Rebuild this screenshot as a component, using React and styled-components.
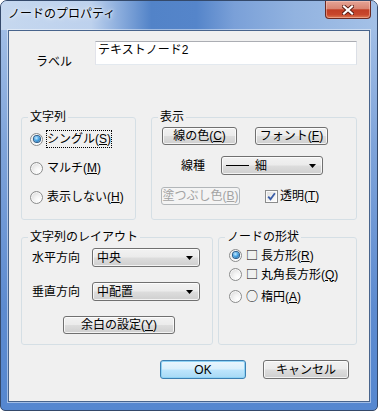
import React from 'react';
import styled, { createGlobalStyle, css } from 'styled-components';

const GlobalStyle = createGlobalStyle`
  html, body {
    margin: 0;
    padding: 0;
    background: #ffffff;
  }
  body {
    font-family: "Liberation Sans", "Noto Sans CJK JP", sans-serif;
    font-size: 12px;
    color: #000;
  }
`;

const Window = styled.div`
  width: 378px;
  height: 411px;
  box-sizing: border-box;
  border: 1px solid #34496a;
  border-radius: 7px 7px 5px 5px;
  background: linear-gradient(180deg, #a9c4e9 0%, #7fa4da 35%, #5d8bd0 75%, #5587d0 100%);
  display: flex;
  flex-direction: column;
  overflow: hidden;
`;

const TitleBar = styled.div`
  height: 29px;
  flex: none;
  display: flex;
  align-items: flex-start;
  background: linear-gradient(90deg, #c6d8ef 0%, #bdd1ed 24%, #8eafde 31%, #5283c8 40%, #5585ca 52%, #7aa0d8 62%, #92b3e0 78%, #a4c1e7 100%);
`;

const Title = styled.div`
  padding: 6px 0 0 7px;
  font-size: 12px;
  line-height: 14px;
  color: #000;
  text-shadow: 0 0 6px #ffffff, 0 0 3px #ffffff;
`;

const CloseButton = styled.div`
  margin-left: auto;
  margin-right: 6px;
  width: 46px;
  height: 18px;
  box-sizing: border-box;
  border: 1px solid #6b2a22;
  border-top: none;
  border-radius: 0 0 4px 4px;
  background: linear-gradient(180deg, #e5a496 0%, #d98573 45%, #c13e25 52%, #c8472c 80%, #dd7a52 100%);
  box-shadow: inset 0 0 0 1px rgba(255, 210, 200, 0.45);
  display: flex;
  align-items: center;
  justify-content: center;
`;

const Body = styled.div`
  flex: 1;
  display: flex;
  padding: 0 7px 8px 7px;
`;

const Client = styled.div`
  flex: 1;
  box-sizing: border-box;
  background: #f0f0f0;
  border: 1px solid #48648c;
  box-shadow: 0 0 0 1px rgba(255, 255, 255, 0.45);
  display: flex;
  flex-direction: column;
  padding: 10px 12px 0 12px;
`;

const LabelRow = styled.div`
  display: grid;
  grid-template-columns: 74px 1fr;
  align-items: start;
`;

const FieldLabel = styled.div`
  padding: 14px 0 0 15px;
  line-height: 14px;
`;

const TextBox = styled.div`
  box-sizing: border-box;
  height: 24px;
  border: 1px solid;
  border-color: #abadb3 #dbdfe6 #e3e9ef #e2e3ea;
  background: #fff;
  padding: 1px 2px;
  line-height: 14px;
`;

const GroupRow = styled.div`
  display: grid;
  grid-template-columns: ${(p) => p.$cols};
  column-gap: ${(p) => p.$gap}px;
  margin-top: ${(p) => p.$mt}px;
`;

const Group = styled.fieldset`
  margin: 0;
  min-width: 0;
  box-sizing: border-box;
  height: ${(p) => p.$h}px;
  padding: ${(p) => p.$top}px 0 0 0;
  border: 1px solid #d5dfe5;
  border-radius: 3px;
  display: flex;
  flex-direction: column;
`;

const Legend = styled.legend`
  margin-left: 6px;
  padding: 0 2px;
  line-height: 14px;
`;

const Row = styled.div`
  display: flex;
  align-items: center;
  height: ${(p) => p.$h || 16}px;
  margin-top: ${(p) => p.$mt || 0}px;
  padding-left: ${(p) => p.$indent || 0}px;
  gap: ${(p) => p.$gap || 4}px;
  line-height: 14px;
  white-space: nowrap;
`;

const Radio = styled.span`
  box-sizing: border-box;
  flex: none;
  width: 13px;
  height: 13px;
  border-radius: 50%;
  border: 1px solid #8b8c8c;
  background: radial-gradient(circle at 70% 72%, #ffffff 0%, #f4f4f4 35%, #d4d4d4 100%);
  box-shadow: inset 0 0 0 1px rgba(255, 255, 255, 0.7);
  display: flex;
  align-items: center;
  justify-content: center;
  ${(p) =>
    p.$checked &&
    css`
      &::after {
        content: '';
        width: 6px;
        height: 6px;
        border-radius: 50%;
        background: radial-gradient(circle at 40% 35%, #c9ecff 0%, #4aa6e6 45%, #17558f 100%);
        box-shadow: 0 0 0 1px #2a5c8a;
      }
    `}
`;

const Focus = styled.span`
  outline: 1px dotted #000;
  outline-offset: 0;
  padding: 1px 0;
`;

const Key = styled.span`
  text-decoration: underline;
`;

const ShapeGlyph = styled.span`
  font-family: "Noto Sans CJK JP", sans-serif;
  margin-right: 3px;
`;

const Button = styled.div`
  box-sizing: border-box;
  flex: none;
  width: ${(p) => p.$w}px;
  height: ${(p) => p.$h || 18}px;
  border: 1px solid #707070;
  border-radius: 3px;
  background: linear-gradient(180deg, #f2f2f2 0%, #ebebeb 48%, #dddddd 52%, #cfcfcf 100%);
  box-shadow: inset 0 0 0 1px rgba(255, 255, 255, 0.75);
  display: flex;
  align-items: center;
  justify-content: center;
  line-height: 14px;
  white-space: nowrap;
  ${(p) =>
    p.$default &&
    css`
      border-color: #3c7fb1;
      background: linear-gradient(180deg, #eaf6fd 0%, #d9f0fc 48%, #bee6fd 52%, #a7d9f5 100%);
      box-shadow: inset 0 0 0 1px #8fd3f5;
    `}
  ${(p) =>
    p.$disabled &&
    css`
      border-color: #b2b6b9;
      background: #f4f4f4;
      box-shadow: none;
      color: #a3a3a3;
    `}
`;

const Select = styled.div`
  box-sizing: border-box;
  flex: none;
  width: ${(p) => p.$w}px;
  height: 19px;
  border: 1px solid #707070;
  border-radius: 3px;
  background: linear-gradient(180deg, #f2f2f2 0%, #ebebeb 48%, #dddddd 52%, #cfcfcf 100%);
  box-shadow: inset 0 0 0 1px rgba(255, 255, 255, 0.75);
  display: flex;
  align-items: center;
  padding: 0 6px 0 4px;
  line-height: 14px;
`;

const LineSample = styled.span`
  width: 23px;
  height: 0;
  border-top: 1px solid #000;
  margin-right: 6px;
`;

const ArrowIcon = styled.svg`
  margin-left: auto;
  flex: none;
`;

const Check = styled.span`
  box-sizing: border-box;
  flex: none;
  width: 13px;
  height: 13px;
  border: 1px solid #8b8c8c;
  background: linear-gradient(135deg, #dcdcdc 0%, #f2f2f2 60%, #ffffff 100%);
  box-shadow: inset 0 0 0 1px rgba(255, 255, 255, 0.8);
  display: flex;
  align-items: center;
  justify-content: center;
`;

const TextLabel = styled.span`
  width: ${(p) => (p.$w ? `${p.$w}px` : 'auto')};
  flex: none;
`;

const Footer = styled.div`
  display: flex;
  justify-content: flex-end;
  gap: 17px;
  margin-top: 15px;
  padding-right: 8px;
`;

const Arrow = () => (
  <ArrowIcon width="7" height="4" viewBox="0 0 7 4">
    <path d="M0 0h7L3.5 4z" fill="#000" />
  </ArrowIcon>
);

const App = () => (
  <>
    <GlobalStyle />
    <Window>
      <TitleBar>
        <Title>ノードのプロパティ</Title>
        <CloseButton>
          <svg width="12" height="10" viewBox="0 0 12 10">
            <path d="M2 1.5 L10 8.5 M10 1.5 L2 8.5" stroke="#5a1d14" strokeWidth="4" strokeLinecap="square" />
            <path d="M2 1.5 L10 8.5 M10 1.5 L2 8.5" stroke="#ffffff" strokeWidth="2.2" strokeLinecap="square" />
          </svg>
        </CloseButton>
      </TitleBar>
      <Body>
        <Client>
          <LabelRow>
            <FieldLabel>ラベル</FieldLabel>
            <TextBox>テキストノード2</TextBox>
          </LabelRow>

          <GroupRow $cols="115px 206px" $gap={15} $mt={41}>
            <Group $h={110} $top={7}>
              <Legend>文字列</Legend>
              <Row $indent={8}>
                <Radio $checked />
                <Focus>シングル(<Key>S</Key>)</Focus>
              </Row>
              <Row $mt={13} $indent={8}>
                <Radio />
                <span>マルチ(<Key>M</Key>)</span>
              </Row>
              <Row $mt={13} $indent={8}>
                <Radio />
                <span>表示しない(<Key>H</Key>)</span>
              </Row>
            </Group>

            <Group $h={110} $top={3}>
              <Legend>表示</Legend>
              <Row $h={18} $indent={10} $gap={18}>
                <Button $w={75}>線の色(<Key>C</Key>)</Button>
                <Button $w={73}>フォント(<Key>F</Key>)</Button>
              </Row>
              <Row $h={19} $mt={11} $indent={29} $gap={16}>
                <TextLabel $w={24}>線種</TextLabel>
                <Select $w={102}>
                  <LineSample />
                  <span>細</span>
                  <Arrow />
                </Select>
              </Row>
              <Row $h={18} $mt={12} $indent={9} $gap={25}>
                <Button $w={79} $disabled>塗つぶし色(<Key>B</Key>)</Button>
                <Row $gap={2}>
                  <Check>
                    <svg width="9" height="9" viewBox="0 0 9 9">
                      <path d="M1.2 4.6 L3.5 7.2 L7.9 1.2" fill="none" stroke="#3b5ea8" strokeWidth="1.8" />
                    </svg>
                  </Check>
                  <span>透明(<Key>T</Key>)</span>
                </Row>
              </Row>
            </Group>
          </GroupRow>

          <GroupRow $cols="192px 139px" $gap={5} $mt={10}>
            <Group $h={115} $top={4}>
              <Legend>文字列のレイアウト</Legend>
              <Row $h={19} $indent={10} $gap={12}>
                <TextLabel $w={48}>水平方向</TextLabel>
                <Select $w={108}>
                  <span>中央</span>
                  <Arrow />
                </Select>
              </Row>
              <Row $h={19} $mt={15} $indent={10} $gap={12}>
                <TextLabel $w={48}>垂直方向</TextLabel>
                <Select $w={108}>
                  <span>中配置</span>
                  <Arrow />
                </Select>
              </Row>
              <Row $h={18} $mt={15} $indent={41}>
                <Button $w={112}>余白の設定(<Key>Y</Key>)</Button>
              </Row>
            </Group>

            <Group $h={115} $top={3}>
              <Legend>ノードの形状</Legend>
              <Row $indent={10}>
                <Radio $checked />
                <span><ShapeGlyph>□</ShapeGlyph>長方形(<Key>R</Key>)</span>
              </Row>
              <Row $mt={3} $indent={10}>
                <Radio />
                <span><ShapeGlyph>□</ShapeGlyph>丸角長方形(<Key>Q</Key>)</span>
              </Row>
              <Row $mt={6} $indent={10}>
                <Radio />
                <span><ShapeGlyph>○</ShapeGlyph>楕円(<Key>A</Key>)</span>
              </Row>
            </Group>
          </GroupRow>

          <Footer>
            <Button $w={86} $h={19} $default>OK</Button>
            <Button $w={86} $h={19}>キャンセル</Button>
          </Footer>
        </Client>
      </Body>
    </Window>
  </>
);

export default App;
